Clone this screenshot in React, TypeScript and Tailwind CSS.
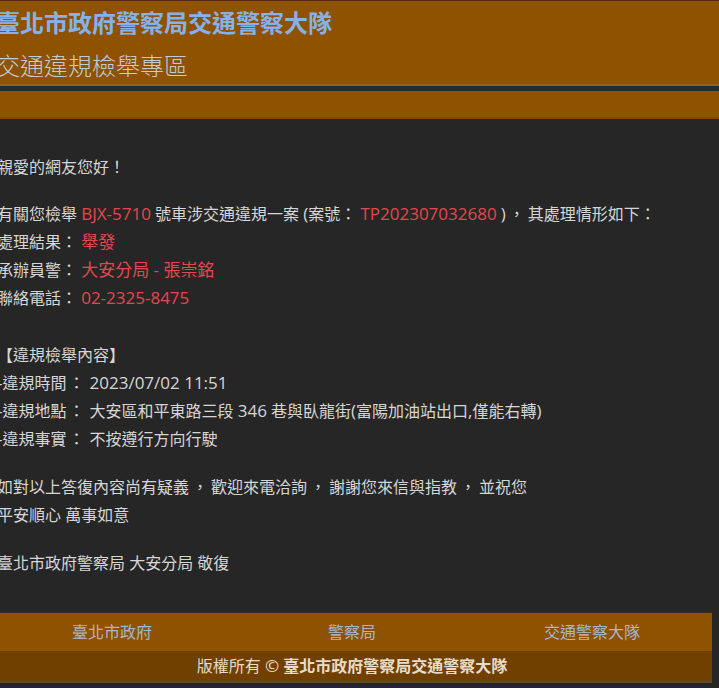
import React from "react";

const font = { fontFamily: '"Open Sans", "Noto Sans CJK TC", "Noto Sans", sans-serif' };

function Red({ children }: { children: React.ReactNode }) {
  return <span className="text-[#e5464f] text-[17px]">{children}</span>;
}

function L({ children }: { children: React.ReactNode }) {
  return <span className="text-[17px]">{children}</span>;
}

function C() {
  return <span className="mx-[3px]">，</span>;
}

function Colon() {
  return <span className="ml-[2px] mr-[5px]">：</span>;
}

export default function App() {
  return (
    <div className="min-h-screen w-full overflow-hidden bg-[#262626]" style={font}>
      {/* header */}
      <div className="border-t border-[#4e2a10] bg-[#8f5200]">
        <div className="h-[83px] -ml-[4px] pt-[6px]">
          <div className="text-[24px] leading-[32px] font-bold text-[#86b2ec]">臺北市政府警察局交通警察大隊</div>
          <div className="mt-[11px] text-[24px] leading-[32px] font-light text-[#c2cad8]">交通違規檢舉專區</div>
        </div>
        <div className="h-[2px] bg-[#9d5e0c]"></div>
      </div>
      <div className="h-[5px] bg-[#2b2b2b]"></div>
      <div className="h-[28px] bg-[#8f5200] border-b-2 border-[#7d4707]"></div>

      {/* body */}
      <div className="-ml-[3px] pt-[34px] text-[16px] leading-[28px] text-[#d6d6d6]">
        <p>親愛的網友您好！</p>
        <div className="mt-[19px]">
          <p>
            有關您檢舉 <Red>BJX-5710</Red> 號車涉交通違規一案 <L>(</L>案號： <Red>TP202307032680</Red> <L>)</L><C />其處理情形如下：
          </p>
          <p>處理結果： <Red>舉發</Red></p>
          <p>承辦員警： <Red>大安分局 - 張崇銘</Red></p>
          <p>聯絡電話： <Red>02-2325-8475</Red></p>
        </div>
        <div className="mt-[29px]">
          <p>【違規檢舉內容】</p>
          <p><L>-</L>違規時間<Colon /><L>2023/07/02 11:51</L></p>
          <p><L>-</L>違規地點<Colon />大安區和平東路三段 <L>346</L> 巷與臥龍街<L>(</L>富陽加油站出口<L>,</L>僅能右轉<L>)</L></p>
          <p><L>-</L>違規事實<Colon />不按遵行方向行駛</p>
        </div>
        <div className="mt-[20px]">
          <p>如對以上答復內容尚有疑義<C />歡迎來電洽詢<C />謝謝您來信與指教<C />並祝您</p>
          <p>平安順心 萬事如意</p>
        </div>
        <p className="mt-[20px]">臺北市政府警察局 大安分局 敬復</p>
      </div>

      {/* footer */}
      <div className="mt-[35px] -ml-[8px] w-[720px] border-t border-[#3a2a1a]">
        <div className="grid h-[38px] grid-cols-3 items-center bg-[#8f5200] text-center text-[16px] text-[#a9b6ca]">
          <div>臺北市政府</div>
          <div>警察局</div>
          <div>交通警察大隊</div>
        </div>
        <div className="flex h-[30px] items-center justify-center bg-[#6f4000] text-[16px] text-[#e6dccb]">
          <span>版權所有 <L>©</L> <b className="font-bold">臺北市政府警察局交通警察大隊</b></span>
        </div>
        <div className="h-[2px] bg-[#5b4a36]"></div>
      </div>
      <div className="h-[10px]"></div>
    </div>
  );
}
